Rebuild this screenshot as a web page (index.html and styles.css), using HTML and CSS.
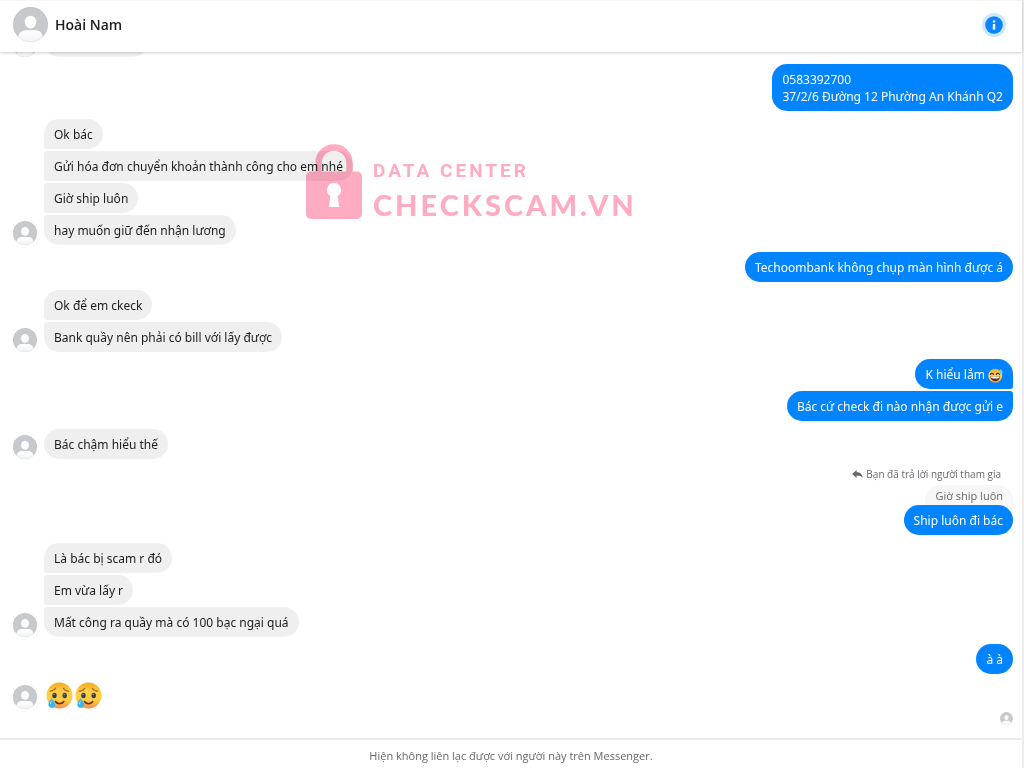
FILE: index.html
```html
<!DOCTYPE html>
<html lang="vi">
<head>
  <meta charset="UTF-8">
  <meta name="viewport" content="width=device-width, initial-scale=1">
  <title>Hoài Nam</title>
  <link rel="stylesheet" href="styles.css">
</head>
<body>
  <!-- Shared drawings -->
  <svg class="defs" aria-hidden="true">
    <defs>
      <linearGradient id="skin" x1="0" y1="0" x2="0" y2="1">
        <stop offset="0" stop-color="#f8a61c"/>
        <stop offset=".35" stop-color="#ffd04a"/>
        <stop offset=".7" stop-color="#ffcb3d"/>
        <stop offset="1" stop-color="#f28a55"/>
      </linearGradient>
      <linearGradient id="shirt" x1="0" y1="0" x2="0" y2="1">
        <stop offset="0" stop-color="#fff"/>
        <stop offset="1" stop-color="#f1f2f5"/>
      </linearGradient>
      <clipPath id="round"><circle cx="18" cy="18" r="18"/></clipPath>
      <symbol id="person" viewBox="0 0 36 36">
        <g clip-path="url(#round)">
          <rect width="36" height="36" fill="#c6c9ce"/>
          <ellipse cx="18" cy="15.500" rx="6" ry="6.600" fill="#fff"/>
          <path d="M5.500 36V31c0-4.500 4-7 8-7h9c4 0 8 2.500 8 7v5z" fill="url(#shirt)"/>
          <circle cx="18" cy="18" r="17.600" fill="none" stroke="#000" stroke-opacity=".04"/>
        </g>
      </symbol>
      <symbol id="tear" viewBox="0 0 28 28">
        <circle cx="14" cy="14" r="13.500" fill="url(#skin)"/>
        <path d="M4.500 9.500c2.500-.2 4.500-1.200 5.500-3M23.500 9.500c-2.500-.2-4.500-1.200-5.500-3" fill="none" stroke="#b8681c" stroke-width="1.400" stroke-linecap="round"/>
        <ellipse cx="8.800" cy="14" rx="2.300" ry="2.800" fill="#383c4c"/>
        <ellipse cx="19.400" cy="14" rx="2.300" ry="2.800" fill="#383c4c"/>
        <circle cx="8.300" cy="13" r=".8" fill="#8c92a8"/>
        <circle cx="18.900" cy="13" r=".8" fill="#8c92a8"/>
        <path d="M9.800 20.200c2 3 6.600 3 8.600 0" fill="none" stroke="#683014" stroke-width="1.600" stroke-linecap="round"/>
        <path d="M5.700 16.800c-1.700 2.400-3.200 4.400-3.200 6.500a3.500 3.500 0 0 0 7 0c0-2-1.900-4.100-3.800-6.500z" fill="#3eb4ee"/>
        <path d="M4.600 22.500c0-1 .4-1.700 1-2.500" fill="none" stroke="#a6e2ff" stroke-width="1" stroke-linecap="round"/>
      </symbol>
      <symbol id="sweat" viewBox="0 0 28 28">
        <circle cx="13.500" cy="14.500" r="13" fill="url(#skin)"/>
        <path d="M4.500 12c1-2.600 4.500-2.600 6 0M15.500 12c1-2.600 4.500-2.600 6 0" fill="none" stroke="#54331d" stroke-width="2.200" stroke-linecap="round"/>
        <path d="M4.500 16h18c0 5-3.800 8.500-9 8.500S4.500 21 4.500 16z" fill="#642b20"/>
        <path d="M6 16h15v2.600c-4 1.400-11 1.400-15 0z" fill="#fff"/>
        <path d="M24 2c-1.600 2-2.800 4-2.800 5.800a3 3 0 0 0 6 0C27.200 6 25.600 4 24 2z" fill="#6accf6"/>
      </symbol>
    </defs>
  </svg>

  <div class="app">
    <header class="topbar">
      <svg class="avatar avatar-lg" role="img" aria-label="Hoài Nam"><use href="#person"/></svg>
      <h1>Hoài Nam</h1>
      <button class="info" aria-label="Thông tin">
        <svg viewBox="0 0 24 24">
          <circle cx="12" cy="12" r="12" fill="#cfe6ff"/>
          <circle cx="12" cy="12" r="8.800" fill="#0a84ff"/>
          <circle cx="12" cy="8.500" r="1.300" fill="#fff"/>
          <path d="M10.800 11h2.400v5.600h-2.400z" fill="#fff"/>
        </svg>
      </button>
    </header>

    <main class="chat">
      <section class="group received">
        <svg class="avatar"><use href="#person"/></svg>
        <div class="stack"><div class="bubble blank"></div></div>
      </section>

      <section class="group sent">
        <p class="bubble">0583392700<br>37/2/6 Đường 12 Phường An Khánh Q2</p>
      </section>

      <section class="group received">
        <svg class="avatar"><use href="#person"/></svg>
        <div class="stack">
          <p class="bubble">Ok bác</p>
          <p class="bubble">Gửi hóa đơn chuyển khoản thành công cho em nhé</p>
          <p class="bubble">Giờ ship luôn</p>
          <p class="bubble">hay muốn giữ đến nhận lương</p>
        </div>
      </section>

      <section class="group sent">
        <p class="bubble">Techoombank không chụp màn hình được á</p>
      </section>

      <section class="group received">
        <svg class="avatar"><use href="#person"/></svg>
        <div class="stack">
          <p class="bubble">Ok để em ckeck</p>
          <p class="bubble">Bank quầy nên phải có bill với lấy được</p>
        </div>
      </section>

      <section class="group sent">
        <p class="bubble">K hiểu lắm <svg class="emoji" role="img" aria-label="cười toát mồ hôi"><use href="#sweat"/></svg></p>
        <p class="bubble">Bác cứ check đi nào nhận được gửi e</p>
      </section>

      <section class="group received">
        <svg class="avatar"><use href="#person"/></svg>
        <div class="stack"><p class="bubble">Bác chậm hiểu thế</p></div>
      </section>

      <section class="group reply">
        <p class="reply-note">
          <svg viewBox="0 0 12 10" aria-hidden="true"><path d="M5 0v2.600c4 0 6.600 2 6.800 6.400C10.400 7 8.400 6.200 5 6.200V9L0 4.500z" fill="#65676b"/></svg>
          Bạn đã trả lời người tham gia
        </p>
        <p class="quote">Giờ ship luôn</p>
        <p class="bubble">Ship luôn đi bác</p>
      </section>

      <section class="group received">
        <svg class="avatar"><use href="#person"/></svg>
        <div class="stack">
          <p class="bubble">Là bác bị scam r đó</p>
          <p class="bubble">Em vừa lấy r</p>
          <p class="bubble">Mất công ra quầy mà có 100 bạc ngại quá</p>
        </div>
      </section>

      <section class="group sent">
        <p class="bubble">à à</p>
      </section>

      <section class="group received emoji-only">
        <svg class="avatar"><use href="#person"/></svg>
        <div class="big-emoji">
          <svg role="img" aria-label="mặt cười rơi lệ"><use href="#tear"/></svg>
          <svg role="img" aria-label="mặt cười rơi lệ"><use href="#tear"/></svg>
        </div>
      </section>

      <svg class="avatar seen" role="img" aria-label="Đã xem"><use href="#person"/></svg>
    </main>

    <footer class="notice">Hiện không liên lạc được với người này trên Messenger.</footer>
  </div>

  <!-- Watermark -->
  <div class="watermark">
    <svg viewBox="0 0 56 75" aria-hidden="true">
      <path d="M12.500 30V19a15.500 15.500 0 0 1 31 0v11" fill="none" stroke="#ffabc1" stroke-width="6.500"/>
      <path fill-rule="evenodd" fill="#ffabc1" d="M5 27.500h46a5 5 0 0 1 5 5V70a5 5 0 0 1-5 5H5a5 5 0 0 1-5-5V32.500a5 5 0 0 1 5-5zM28 39a7 7 0 0 0-3.600 13L22.800 63h10.400l-1.600-11A7 7 0 0 0 28 39z"/>
    </svg>
    <div>
      <div class="wm-small">DATA CENTER</div>
      <div class="wm-big">CHECKSCAM.VN</div>
    </div>
  </div>
</body>
</html>
```

FILE: styles.css
```css
:root {
  --blue: #0084ff;
  --gray: #efefef;
  --pink: #ffabc1;
  --muted: #65676b;
  --font-stack: "Open Sans", "Noto Sans", sans-serif;
  --chat-font: "Noto Sans", "Open Sans", sans-serif;
}
* {box-sizing: border-box; margin: 0; padding: 0;}
body {
  font-family: var(--font-stack);
  font-size: 12px;
  line-height: 17px;
  background: #fff;
  color: #1c1c1c;
}
.defs {position: absolute; width: 0; height: 0;}

.app {
  display: flex;
  flex-direction: column;
  height: 100vh;
  border-right: 2px solid #ededed;
}

/* Header */
.topbar {
  display: flex;
  align-items: center;
  gap: 7px;
  flex: none;
  padding: 6px 16px 10px 13px;
  border-top: 1px solid #f5f5f5;
  box-shadow: 0 1px 3px rgba(0, 0, 0, .2);
  z-index: 1;
}
h1 {font-size: 14px; line-height: 20px; font-weight: 600;}
.info {
  width: 24px; height: 24px; margin-left: auto;
  border: none; background: none; cursor: pointer;
}
.info svg {display: block;}

/* Avatars */
.avatar {width: 24px; height: 24px; flex: none; display: block;}
.avatar-lg {width: 35px; height: 35px;}
.seen {width: 13px; height: 13px; align-self: flex-end;}

/* Messages */
.chat {
  flex: 1;
  min-height: 0;
  overflow: hidden;
  display: flex;
  flex-direction: column;
  justify-content: flex-end;
  padding: 0 9px 13px 13px;
}
.group {display: flex; flex: none;}
.received {align-items: flex-end; gap: 7px; margin-top: 8px;}
.sent, .reply {flex-direction: column; align-items: flex-end; gap: 2px; margin-top: 7px;}
.stack {display: flex; flex-direction: column; align-items: flex-start; gap: 2px;}
.bubble {
  padding: 7px 10px 6px;
  border-radius: 15px;
  background: var(--gray);
  font-family: var(--chat-font);
}
.blank {width: 104px; height: 30px;}
.stack .bubble:not(:last-child) {border-bottom-left-radius: 3px;}
.stack .bubble:not(:first-child) {border-top-left-radius: 3px;}
.sent .bubble, .reply .bubble {background: var(--blue); color: #fff;}
.sent .bubble:not(:last-child) {border-bottom-right-radius: 3px;}
.sent .bubble:not(:first-child) {border-top-right-radius: 3px;}
.emoji {width: 15px; height: 15px; vertical-align: -4px;}
.emoji-only {align-items: center;}
.big-emoji {display: flex; gap: 2px; padding: 0 2px 3px;}
.big-emoji svg {width: 27px; height: 27px;}

/* Reply */
.reply {gap: 0;}
.reply-note {
  display: flex; align-items: center; gap: 3px;
  padding: 0 12px 2px 0;
  font-size: 10px;
  color: var(--muted);
}
.reply-note svg {width: 11px; height: 9px;}
.quote {
  padding: 2px 10px 17px;
  margin-bottom: -16px;
  border-radius: 15px 15px 0 0;
  background: #f7f7f7;
  color: var(--muted);
  font-size: 11px;
}

/* Footer */
.notice {
  flex: none;
  padding: 7px 0 4px;
  border-top: 2px solid #ededed;
  text-align: center;
  font-size: 11px;
  color: var(--muted);
}

/* Watermark lies over the chat */
.watermark {
  position: absolute;
  left: 306px; top: 144px;
  display: flex;
  gap: 11px;
  color: var(--pink);
  mix-blend-mode: multiply;
  pointer-events: none;
}
.watermark svg {width: 56px; height: 75px;}
.wm-small {
  padding-top: 15px;
  font: 700 19px/24px Roboto, sans-serif;
  letter-spacing: 3px;
}
.wm-big {
  padding-top: 4px;
  font: 900 29px/36px Lato, sans-serif;
  letter-spacing: 3px;
}
```
